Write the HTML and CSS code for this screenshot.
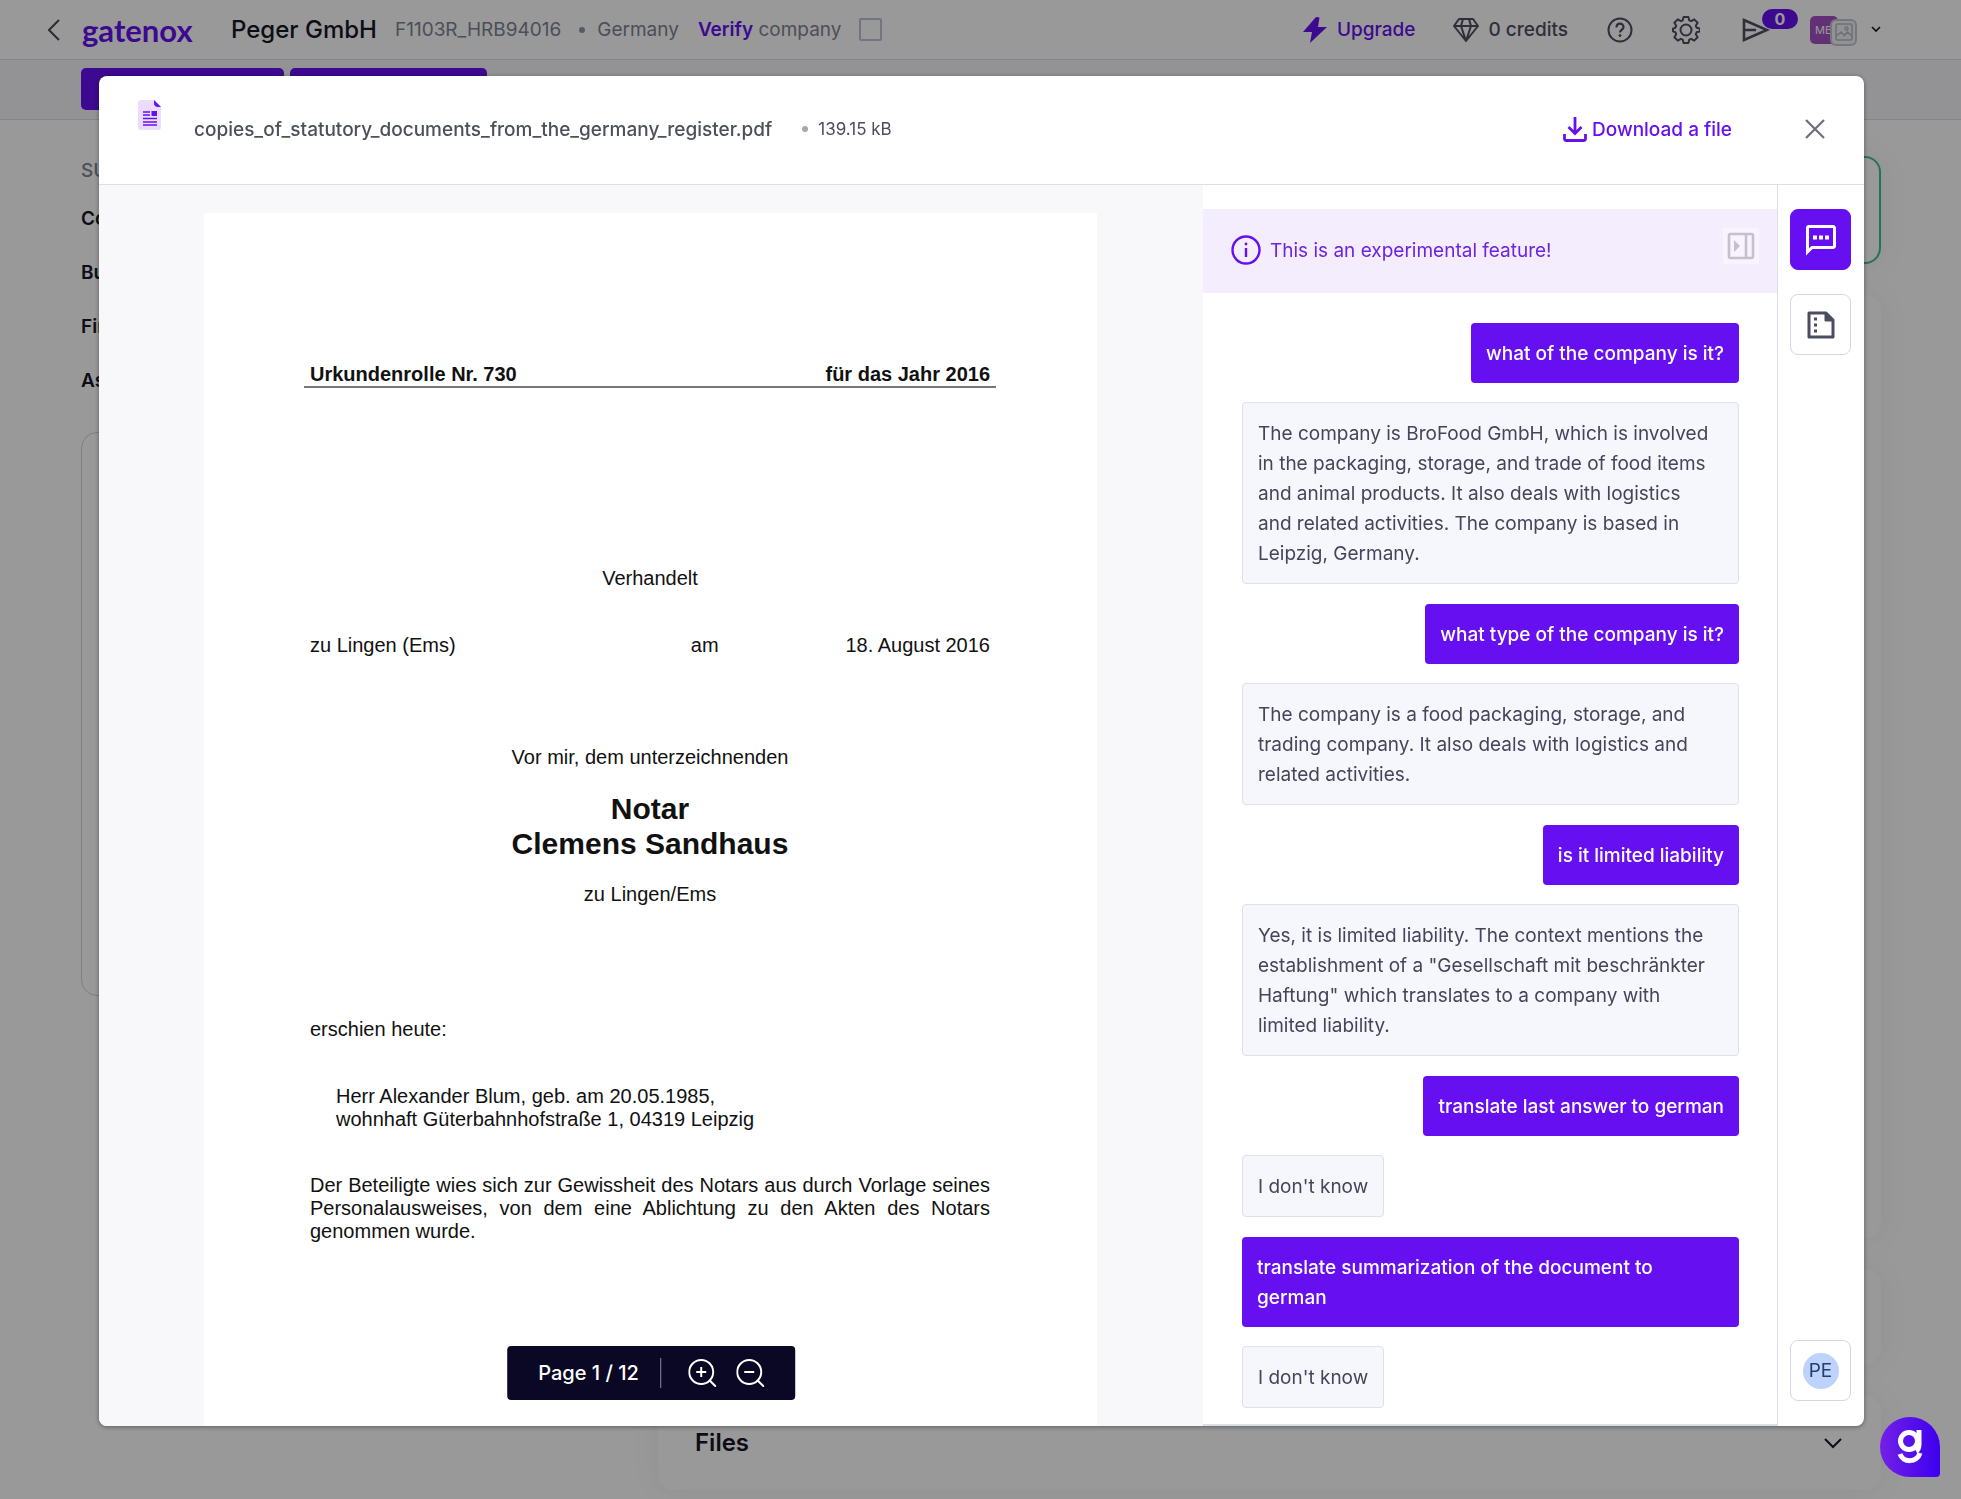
FILE: index.html
```html
<!DOCTYPE html>
<html lang="en">
<head>
<meta charset="utf-8">
<meta name="viewport" content="width=device-width, initial-scale=1">
<title>Peger GmbH – Gatenox</title>
<link rel="stylesheet" href="styles.css">
</head>
<body>
<div class="app">
  <header class="topbar">
    <div class="topbar-left">
      <button class="icon-btn back" aria-label="Back">
        <svg width="12" height="22" viewBox="0 0 12 22" fill="none" stroke="currentColor" stroke-width="2"><path d="M11 1 1 11l10 10"/></svg>
      </button>
      <a class="logo" href="#">gatenox</a>
      <h1 class="company">Peger GmbH</h1>
      <span class="meta">F1103R_HRB94016</span>
      <span class="dot"></span>
      <span class="meta">Germany</span>
      <label class="verify" for="verify"><b>Verify</b> company</label>
      <input class="verify-box" type="checkbox" id="verify">
    </div>
    <div class="topbar-right">
      <a class="upgrade" href="#">
        <svg width="24" height="26" viewBox="0 0 24 26" fill="currentColor"><path d="M13 0 0 15h9l-2 11 17-16h-9l1.500-9.500z"/></svg>
        Upgrade
      </a>
      <a class="credits" href="#">
        <svg width="26" height="24" viewBox="0 0 26 24" fill="none" stroke="currentColor" stroke-width="2" stroke-linejoin="round"><path d="M6 1h14l5 7-12 15L1 8zM1 8h24M10 1 8 8l5 15 5-15-2-7"/></svg>
        0 credits
      </a>
      <button class="icon-btn help" aria-label="Help">
        <svg width="26" height="26" viewBox="0 0 26 26" fill="none" stroke="currentColor" stroke-width="2"><circle cx="13" cy="13" r="11.500"/><path d="M9.500 10.500c0-5 7-5 7-.5 0 3-3.500 2.500-3.500 5.500" stroke-width="2.200"/><circle cx="13" cy="18.500" r="1" fill="currentColor" stroke-width="1"/></svg>
      </button>
      <button class="icon-btn gear" aria-label="Settings">
        <svg width="28" height="28" viewBox="0 0 28 28" fill="none" stroke="currentColor" stroke-width="2" stroke-linejoin="round"><circle cx="14" cy="14" r="5.500"/><path d="M11.600 1h4.800l.9 3.400 1.900.8 3-1.800 3.400 3.400-1.800 3 .8 1.900 3.400.9v2.800l-3.400.9-.8 1.900 1.800 3-3.400 3.400-3-1.800-1.900.8-.9 3.400h-4.800l-.9-3.400-1.900-.8-3 1.800-3.400-3.400 1.800-3-.8-1.900L1 15.400v-2.800l2.400-.9.800-1.900-1.800-3 3.400-3.400 3 1.800 1.900-.8z"/></svg>
      </button>
      <button class="icon-btn send" aria-label="Requests">
        <svg width="28" height="24" viewBox="0 0 28 24" fill="none" stroke="currentColor" stroke-width="2.600"><path d="M2 2v20l23-10zM2 12h12"/></svg>
        <span class="badge">0</span>
      </button>
      <button class="account" aria-label="Account">
        <span class="avatar">MB</span>
        <span class="thumb">
          <svg width="18" height="18" viewBox="0 0 18 18" fill="none" stroke="currentColor" stroke-width="1.600"><rect x="1" y="1" width="16" height="16" rx="1.500"/><path d="m1.500 13 4.500-4 3.500 3.500L12.500 9l4 4"/><circle cx="11.500" cy="5.500" r="1.500"/></svg>
        </span>
        <svg class="caret" width="10" height="7" viewBox="0 0 10 7" fill="none" stroke="currentColor" stroke-width="1.600"><path d="m1 1 4 4 4-4"/></svg>
      </button>
    </div>
  </header>
  <div class="tabs">
    <button class="tab tab-wide" aria-label="Overview"></button>
    <button class="tab" aria-label="Reports"></button>
  </div>
  <main class="content">
    <aside class="side">
      <p class="side-title">SUMMARY</p>
      <nav class="side-nav">
        <a href="#">Company</a>
        <a href="#">Business</a>
        <a href="#">Financials</a>
        <a href="#">Associates</a>
      </nav>
      <div class="side-card"></div>
    </aside>
    <div class="cards">
      <section class="card card-status"></section>
      <section class="card card-details"></section>
      <section class="card card-row"></section>
      <section class="card card-row">
        <h2>Files</h2>
        <svg width="18" height="12" viewBox="0 0 18 12" fill="none" stroke="currentColor" stroke-width="2"><path d="m1 2 8 8 8-8"/></svg>
      </section>
    </div>
  </main>
</div>

<div class="backdrop">
  <div class="modal" role="dialog" aria-modal="true" aria-label="Document preview">
    <header class="modal-head">
      <svg class="file-icon" width="24" height="30" viewBox="0 0 24 30"><path d="M3 0h13l7 7v20a3 3 0 0 1-3 3H3a3 3 0 0 1-3-3V3a3 3 0 0 1 3-3z" fill="#e9dcfd"/><path d="M16 0v3a4 4 0 0 0 4 4h3z" fill="#660ff0"/><path d="M5 12h7M5 15h7M5 18.500h14M5 22h14M5 25h14" stroke="#660ff0" stroke-width="1.600"/><path d="M13.500 11H19v5h-5.500z" fill="#660ff0"/></svg>
      <span class="file-name">copies_of_statutory_documents_from_the_germany_register.pdf</span>
      <span class="dot"></span>
      <span class="file-size">139.15 kB</span>
      <a class="download" href="#">
        <svg width="24" height="25" viewBox="0 0 24 25" fill="none" stroke="currentColor" stroke-width="2.800"><path d="M12 0v16M5.500 10l6.500 6.500 6.500-6.500M1.500 17v4.500a2 2 0 0 0 2 2h17a2 2 0 0 0 2-2V17"/></svg>
        Download a file
      </a>
      <button class="icon-btn close" aria-label="Close">
        <svg width="20" height="20" viewBox="0 0 20 20" fill="none" stroke="currentColor" stroke-width="2.200"><path d="m1 1 18 18M19 1 1 19"/></svg>
      </button>
    </header>
    <div class="modal-body">
      <div class="viewer">
        <article class="page" lang="de">
          <div class="deed-head"><span>Urkundenrolle Nr. 730</span><span>für das Jahr 2016</span></div>
          <p class="deed-title">Verhandelt</p>
          <div class="deed-place"><span>zu Lingen (Ems)</span><span>am</span><span>18. August 2016</span></div>
          <p class="deed-before">Vor mir, dem unterzeichnenden</p>
          <h2 class="deed-notary">Notar<br>Clemens Sandhaus</h2>
          <p class="deed-seat">zu Lingen/Ems</p>
          <p class="deed-appeared">erschien heute:</p>
          <p class="deed-person">Herr Alexander Blum, geb. am 20.05.1985,<br>wohnhaft Güterbahnhofstraße 1, 04319 Leipzig</p>
          <p class="deed-text">Der Beteiligte wies sich zur Gewissheit des Notars aus durch Vorlage seines Personalausweises, von dem eine Ablichtung zu den Akten des Notars genommen wurde.</p>
        </article>
        <div class="pager">
          <span class="pager-label">Page 1 / 12</span>
          <button class="icon-btn" aria-label="Zoom in">
            <svg width="28" height="28" viewBox="0 0 28 28" fill="none" stroke="currentColor" stroke-width="2"><circle cx="13" cy="13" r="12"/><path d="m21 21 7 7M13 8v10M8 13h10"/></svg>
          </button>
          <button class="icon-btn" aria-label="Zoom out">
            <svg width="28" height="28" viewBox="0 0 28 28" fill="none" stroke="currentColor" stroke-width="2"><circle cx="13" cy="13" r="12"/><path d="m21 21 7 7M8 13h10"/></svg>
          </button>
        </div>
      </div>
      <section class="chat" aria-label="Chat">
        <div class="notice">
          <svg width="30" height="30" viewBox="0 0 30 30" fill="none" stroke="#660ff0" stroke-width="2.400"><circle cx="15" cy="15" r="13.500"/><path d="M15 13v9"/><circle cx="15" cy="9" r=".8" fill="#660ff0" stroke-width="1.200"/></svg>
          <span>This is an experimental feature!</span>
          <button class="icon-btn collapse" aria-label="Collapse panel">
            <svg width="28" height="28" viewBox="0 0 28 28" fill="none" stroke="currentColor" stroke-width="2.600"><rect x="2" y="2" width="24" height="24" rx="1.500"/><path d="M19 2v24"/><path d="M7 8v12l6-6z" fill="currentColor" stroke="none"/></svg>
          </button>
        </div>
        <div class="messages">
          <p class="msg user">what of the company is it?</p>
          <p class="msg bot long">The company is BroFood GmbH, which is involved in the packaging, storage, and trade of food items and animal products. It also deals with logistics and related activities. The company is based in Leipzig, Germany.</p>
          <p class="msg user">what type of the company is it?</p>
          <p class="msg bot long">The company is a food packaging, storage, and trading company. It also deals with logistics and related activities.</p>
          <p class="msg user">is it limited liability</p>
          <p class="msg bot long">Yes, it is limited liability. The context mentions the establishment of a "Gesellschaft mit beschränkter Haftung" which translates to a company with limited liability.</p>
          <p class="msg user">translate last answer to german</p>
          <p class="msg bot">I don't know</p>
          <p class="msg user">translate summarization of the document to german</p>
          <p class="msg bot">I don't know</p>
        </div>
      </section>
      <aside class="rail">
        <button class="rail-btn active" aria-label="Chat">
          <svg width="32" height="32" viewBox="0 0 32 32" fill="none" stroke="currentColor"><path d="M2.500 28V4A1.500 1.500 0 0 1 4 2.500h24A1.500 1.500 0 0 1 29.500 4v18a1.500 1.500 0 0 1-1.500 1.500H7z" stroke-width="3"/><path d="M8 13.500h4M14 13.500h4M20 13.500h4" stroke-width="4"/></svg>
        </button>
        <button class="rail-btn" aria-label="Summary">
          <svg width="28" height="28" viewBox="0 0 28 28" fill="none" stroke="currentColor"><path d="M2 2h17l7 7v17H2z" stroke-width="3" stroke-linejoin="round"/><path d="M18 2v8h8z" fill="currentColor"/><path d="M7 8h3M7 14h3M7 20h3" stroke-width="3"/></svg>
        </button>
        <button class="rail-btn person"><span>PE</span></button>
      </aside>
    </div>
  </div>
</div>
<button class="helper" aria-label="Open assistant">
  <svg width="30" height="36" viewBox="0 0 30 36" fill="none" stroke="#fff" stroke-width="5"><circle cx="14" cy="12" r="8.500"/><path d="M24 1v14c0 4-1 6-3 7"/><path d="M5 25c3 9 17 9 20-1"/></svg>
</button>
</body>
</html>
```

FILE: styles.css
```css
* { box-sizing: border-box; }

body {
  margin: 0;
  height: 100vh;
  overflow: hidden;
  background: #fff;
  color: #161629;
  font-family: Inter, "Liberation Sans", sans-serif;
  font-size: 19px;
}

h1, h2, p { margin: 0; font-weight: inherit; }
a { color: inherit; text-decoration: none; }
svg { display: block; flex: none; }

button {
  padding: 0;
  border: 0;
  background: none;
  color: inherit;
  font: inherit;
  cursor: pointer;
}

.dot {
  width: 6px;
  height: 6px;
  flex: none;
  border-radius: 50%;
  background: #a5a8b4;
}

/* Top bar */
.topbar {
  display: flex;
  justify-content: space-between;
  align-items: center;
  height: 60px;
  padding: 0 80px 0 48px;
  border-bottom: 1px solid #dcdce6;
  white-space: nowrap;
}
.topbar-left, .topbar-right { display: flex; align-items: center; }
.back { margin-right: 22px; color: #4b4b58; }
.logo {
  width: 149px;
  color: #660ff0;
  font-family: Lato, sans-serif;
  font-size: 31px;
  font-weight: 700;
  line-height: 40px;
}
.company { margin-right: 18px; font-size: 24px; font-weight: 500; }
.meta { color: #7c8494; }
.topbar-left .dot { margin: 0 12px 0 18px; background: #8d95a4; }
.verify { margin-left: 19px; color: #83838f; }
.verify b { color: #660ff0; font-weight: 600; }
.verify-box {
  appearance: none;
  width: 23px;
  height: 23px;
  margin: 0 0 0 18px;
  border: 2px solid #bfc4d2;
  border-radius: 2px;
}

.upgrade { display: flex; align-items: center; gap: 10px; color: #660ff0; font-weight: 500; }
.credits { display: flex; align-items: center; gap: 9px; margin-left: 38px; color: #4f4f60; font-weight: 500; }
.topbar-right .icon-btn { color: #4f4f60; }
.help { margin-left: 39px; }
.gear { margin-left: 39px; }
.send { position: relative; margin-left: 42px; }
.badge {
  position: absolute;
  top: -9px;
  left: 20px;
  width: 36px;
  height: 20px;
  border-radius: 10px;
  background: #660ff0;
  color: #fff;
  font-size: 16px;
  font-weight: 700;
  line-height: 20px;
}
.account { display: flex; align-items: center; margin-left: 40px; }
.avatar {
  width: 28px;
  height: 28px;
  padding-left: 5px;
  border-radius: 5px;
  background: #a550c4;
  color: #fff;
  font-size: 11px;
  line-height: 28px;
  text-align: left;
}
.thumb {
  display: grid;
  place-items: center;
  width: 27px;
  height: 27px;
  margin: 5px 14px 0 -8px;
  border: 2px solid #c3c7d2;
  border-radius: 6px;
  background: #f3f3f8;
  color: #b6bbc8;
}

/* Page behind the dialog */
.tabs {
  display: flex;
  gap: 6px;
  height: 60px;
  padding: 8px 81px 9px;
  border-bottom: 1px solid #dcdce6;
  background: #f6f6fa;
}
.tab { width: 197px; border-radius: 5px; background: #660ff0; }
.tab-wide { width: 203px; }
.content {
  display: grid;
  grid-template-columns: 500px 1fr;
  gap: 77px;
  padding: 36px 80px 8px 81px;
}
.side { font-weight: 600; line-height: 24px; }
.side-title { margin-bottom: 21px; color: #7c8494; font-weight: 500; line-height: 30px; }
.side-nav { display: grid; gap: 30px; }
.side-card { height: 564px; margin-top: 39px; border: 1px solid #d3d3df; border-radius: 16px; }
.cards { display: grid; gap: 31px; }
.card { border-radius: 16px; background: #fff; box-shadow: 0 0 32px rgba(30, 30, 70, .06); }
.card-status { height: 108px; border: 2px solid #3fbf8f; }
.card-details { height: 943px; }
.card-row {
  display: flex;
  justify-content: space-between;
  align-items: center;
  height: 95px;
  padding: 0 39px 0 37px;
}
.card-row h2 { font-size: 24px; font-weight: 600; }

/* Dialog */
.backdrop {
  position: fixed;
  inset: 0;
  display: flex;
  padding: 76px 97px 73px 99px;
  background: rgba(0, 0, 0, .4);
}
.modal {
  display: flex;
  flex: 1;
  flex-direction: column;
  min-width: 0;
  overflow: hidden;
  border-radius: 8px;
  background: #fff;
  box-shadow: 0 1px 5px rgba(0, 0, 0, .4);
}
.modal-head {
  display: flex;
  align-items: center;
  height: 109px;
  flex: none;
  padding: 0 39px 2px;
  border-bottom: 1px solid #dcdfe6;
  white-space: nowrap;
}
.file-icon { align-self: flex-start; margin: 24px 32px 0 0; }
.file-name { color: #4c5159; font-weight: 500; }
.modal-head .dot { margin: 0 10px 0 30px; }
.file-size { color: #4c4c5e; font-size: 17px; }
.download { display: flex; align-items: center; gap: 5px; margin-left: auto; color: #660ff0; font-weight: 500; }
.close { margin-left: 73px; color: #6a7078; }

.modal-body { display: grid; flex: 1; grid-template-columns: 1fr 574px 87px; min-height: 0; }

/* Document viewer */
.viewer { position: relative; min-height: 0; overflow: hidden; padding: 28px 106px 0 105px; background: #f8f8fb; }
.page {
  min-height: 100%;
  padding: 150px 107px 0 106px;
  background: #fff;
  color: #111;
  font-family: "Liberation Sans", Arial, sans-serif;
  font-size: 20px;
  line-height: 23px;
}
.deed-head {
  display: flex;
  justify-content: space-between;
  margin: 0 -6px;
  padding: 0 6px;
  border-bottom: 2px solid #777;
  font-weight: 700;
}
.deed-title { margin-top: 179px; text-align: center; }
.deed-place { display: grid; grid-template-columns: 56% 1fr auto; margin-top: 44px; }
.deed-before { margin-top: 89px; text-align: center; }
.deed-notary { margin-top: 22px; font-size: 30px; font-weight: 700; line-height: 35px; text-align: center; }
.deed-seat { margin-top: 22px; text-align: center; }
.deed-appeared { margin-top: 112px; }
.deed-person { margin: 44px 0 0 26px; }
.deed-text { margin-top: 43px; text-align: justify; }

.pager {
  position: absolute;
  bottom: 26px;
  left: 50%;
  display: flex;
  align-items: center;
  gap: 20px;
  height: 54px;
  padding: 0 31px;
  border-radius: 4px;
  background: #0b0826;
  color: #fff;
  transform: translateX(-50%);
  white-space: nowrap;
}
.pager-label {
  margin-right: 7px;
  padding-right: 21px;
  border-right: 1px solid #8b8a9c;
  font-size: 20px;
  font-weight: 500;
  line-height: 30px;
}

/* Chat */
.chat { min-height: 0; overflow: hidden; padding-top: 24px; border-bottom: 2px solid #dcdfe6; }
.notice {
  display: flex;
  align-items: center;
  gap: 9px;
  height: 84px;
  padding: 0 18px 2px 28px;
  background: #f4edfe;
  color: #6d24e0;
}
.collapse {
  display: grid;
  place-items: center;
  width: 36px;
  height: 36px;
  margin: 0 0 8px auto;
  background: #f8f3fe;
  color: #c5bfd0;
}
.messages { display: flex; flex-direction: column; align-items: flex-start; padding: 30px 38px 0 39px; }
.msg { padding: 16px 15px 14px; border-radius: 4px; line-height: 30px; }
.user { align-self: flex-end; margin-bottom: 19px; background: #660ff0; color: #fff; font-weight: 500; }
.bot { margin-bottom: 20px; border: 1px solid #dfe1ea; background: #f6f7fd; color: #45455a; }
.long { padding-right: 26px; }

/* Tool rail */
.rail {
  display: flex;
  flex-direction: column;
  gap: 24px;
  padding: 24px 12px 25px;
  border-left: 1px solid #dcdfe6;
}
.rail-btn {
  display: grid;
  place-items: center;
  width: 61px;
  height: 61px;
  border: 1px solid #d5d8e2;
  border-radius: 8px;
  color: #4c4c60;
}
.rail-btn.active { border-color: #660ff0; background: #660ff0; color: #fff; }
.person { margin-top: auto; }
.person span {
  width: 36px;
  height: 36px;
  border-radius: 50%;
  background: #bdd3fc;
  color: #24406e;
  line-height: 36px;
}

.helper {
  position: fixed;
  right: 21px;
  bottom: 22px;
  display: grid;
  place-items: center;
  width: 60px;
  height: 60px;
  border-radius: 30px 30px 4px 30px;
  background: linear-gradient(90deg, #7420e6, #3c00f0);
}
```
